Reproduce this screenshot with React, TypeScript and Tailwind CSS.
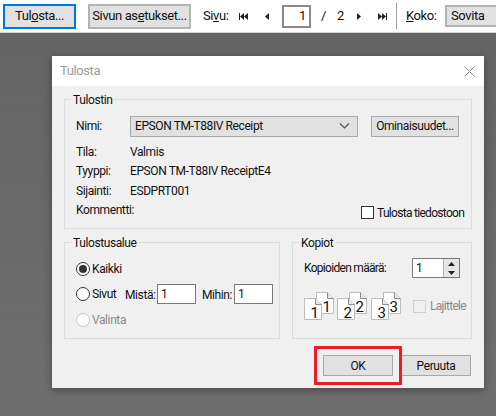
const btn = "flex items-center justify-center bg-[#e1e1e1] border border-[#a8a8a8] whitespace-nowrap";
const toolBtn = "flex items-center justify-center bg-[#e1e1e1] border-2 border-[#b4b4b4] whitespace-nowrap";

const First = () => (
  <svg width="9" height="7" viewBox="0 0 9 7" fill="#222">
    <rect x="0" y="0" width="1" height="7" />
    <path d="M5 0v7L1 3.5zM9 0v7L5 3.5z" />
  </svg>
);
const Prev = () => (
  <svg width="4" height="7" viewBox="0 0 4 7" fill="#222">
    <path d="M4 0v7L0 3.5z" />
  </svg>
);
const Next = () => (
  <svg width="4" height="7" viewBox="0 0 4 7" fill="#222">
    <path d="M0 0v7l4-3.5z" />
  </svg>
);
const Last = () => (
  <svg width="9" height="7" viewBox="0 0 9 7" fill="#222">
    <path d="M0 0v7l4-3.5zM4 0v7l4-3.5z" />
    <rect x="8" y="0" width="1" height="7" />
  </svg>
);

const Toolbar = () => (
  <div className="flex h-[33px] items-center bg-white border-b border-[#d4d4d4] pl-[3px] text-[13px] tracking-[-0.4px]">
    <button className="w-[73px] h-[25px] text-[#111] flex items-center justify-center bg-[#e1e1e1] border-2 border-[#0078d7]">
      <span>
        Tul<u>o</u>sta...
      </span>
    </button>
    <button className={toolBtn + " w-[103px] h-[25px] ml-[12px] text-[#111]"}>
      <span>
        Sivun as<u>e</u>tukset...
      </span>
    </button>
    <span className="ml-[12px] w-[36px]">
      Si<u>v</u>u:
    </span>
    <First />
    <span className="ml-[17px]">
      <Prev />
    </span>
    <div className="ml-[13px] w-[29px] h-[23px] border-2 border-[#8a8a8a] flex items-center justify-end pr-[3px]">1</div>
    <span className="ml-[10px] w-[6px]">/</span>
    <span className="ml-[10px] w-[7px]">2</span>
    <span className="ml-[13px]">
      <Next />
    </span>
    <span className="ml-[17px]">
      <Last />
    </span>
    <div className="ml-[9px] w-px h-[26px] bg-[#a0a0a0]" />
    <span className="ml-[9px] w-[30px]">
      <u>K</u>oko:
    </span>
    <div className="ml-[9px] h-[22px] flex-1 flex items-center pl-[4px] bg-[#e1e1e1] border-2 border-[#b4b4b4] border-r-0">Sovita</div>
  </div>
);

const Group = ({ title, className, children }: { title: string; className: string; children: React.ReactNode }) => (
  <div className={"relative border border-[#dcdcdc] " + className}>
    <span className="absolute left-[6px] top-[-8px] bg-[#f0f0f0] px-[2px] leading-[16px] text-[#111]">{title}</span>
    {children}
  </div>
);

const Info = ({ label, value, className }: { label: string; value?: string; className: string }) => (
  <div className={"flex h-[18px] items-center " + className}>
    <span className="w-[54px]">{label}</span>
    <span>{value}</span>
  </div>
);

const Radio = ({ checked, disabled }: { checked?: boolean; disabled?: boolean }) => (
  <span
    className={
      "w-[14px] h-[14px] rounded-full border bg-white flex items-center justify-center " +
      (disabled ? "border-[#c4c4c4] bg-[#f0f0f0]" : "border-[#333]")
    }
  >
    {checked && <span className="w-[8px] h-[8px] rounded-full bg-[#333]" />}
  </span>
);

const Page = ({ n }: { n: number }) => (
  <div className="relative w-[18px] h-[22px]">
    <svg width="18" height="22" viewBox="0 0 18 22" className="absolute inset-0">
      <path d="M.5.5h11l6 6v15H.5z" fill="#fff" stroke="#bcbcbc" />
      <path d="M11.5.5v6h6" fill="#e8e8e8" stroke="#8c8c8c" />
    </svg>
    <span className="absolute right-[3px] bottom-[-2px] text-[15px] leading-[18px] tracking-normal text-[#111]">{n}</span>
  </div>
);

const Collate = ({ n, className }: { n: number; className: string }) => (
  <div className={"relative w-[30px] h-[28px] " + className}>
    <div className="absolute right-0 top-0">
      <Page n={n} />
    </div>
    <div className="absolute left-0 bottom-0">
      <Page n={n} />
    </div>
  </div>
);

const Dialog = () => (
  <div className="absolute left-[52px] top-[56px] w-[432px] h-[332px] bg-[#f0f0f0] shadow-[0_2px_8px_rgba(0,0,0,0.35)]">
    <div className="h-[30px] bg-white flex items-center justify-between pl-[8px] pr-[9px] text-[#9a9a9a] text-[13px]">
      <span>Tulosta</span>
      <svg width="11" height="11" viewBox="0 0 11 11" stroke="#8a8a8a" fill="none">
        <path d="M.5.5l10 10M10.5.5l-10 10" />
      </svg>
    </div>

    <Group title="Tulostin" className="ml-[12px] mt-[13px] w-[408px] h-[130px] pl-[11px]">
      <div className="flex h-[22px] mt-[15px] items-center">
        <span className="w-[54px]">Nimi:</span>
        <div className={btn + " !justify-between w-[228px] h-[21px] pl-[4px] pr-[7px]"}>
          <span>EPSON TM-T88IV Receipt</span>
          <svg width="11" height="6" viewBox="0 0 11 6" fill="none" stroke="#555" strokeWidth="1.2">
            <path d="M1 .5l4.5 4.5L10 .5" />
          </svg>
        </div>
        <div className={btn + " w-[88px] h-[21px] ml-[13px]"}>Ominaisuudet...</div>
      </div>
      <Info label="Tila:" value="Valmis" className="mt-[6px]" />
      <Info label="Tyyppi:" value="EPSON TM-T88IV ReceiptE4" className="mt-px" />
      <Info label="Sijainti:" value="ESDPRT001" className="mt-[2px]" />
      <div className="flex items-center justify-between h-[18px] mt-[1px] pr-[8px]">
        <span>Kommentti:</span>
        <div className="flex items-center gap-[3px] mt-[5px]">
          <span className="w-[13px] h-[13px] border border-[#333] bg-white" />
          <span className="w-[86px] whitespace-nowrap tracking-[-0.7px]">Tulosta tiedostoon</span>
        </div>
      </div>
    </Group>

    <div className="flex ml-[12px] mt-[13px] w-[408px]">
      <Group title="Tulostusalue" className="w-[216px] h-[97px] pl-[11px]">
        <div className="flex items-center gap-[2px] h-[16px] mt-[18px]">
          <Radio checked />
          <span>Kaikki</span>
        </div>
        <div className="flex items-center h-[20px] mt-[7px]">
          <Radio />
          <span className="ml-[2px] w-[33px]">Sivut</span>
          <span className="mt-[2px] w-[32px]">Mistä:</span>
          <div className="w-[39px] h-[20px] border border-[#7a7a7a] bg-white pl-[3px] flex items-center">1</div>
          <span className="ml-[6px] mt-[2px] w-[32px]">Mihin:</span>
          <div className="w-[39px] h-[20px] border border-[#7a7a7a] bg-white pl-[3px] flex items-center">1</div>
        </div>
        <div className="flex items-center gap-[2px] h-[16px] mt-[8px] text-[#8a8a8a]">
          <Radio disabled />
          <span>Valinta</span>
        </div>
      </Group>
      <Group title="Kopiot" className="w-[180px] h-[97px] ml-[12px] pl-[11px]">
        <div className="flex items-center h-[20px] mt-[15px]">
          <span className="w-[108px] whitespace-nowrap tracking-[-0.7px]">Kopioiden määrä:</span>
          <div className="w-[48px] h-[20px] border border-[#7a7a7a] bg-white pl-[3px] flex items-center justify-between">
            <span>1</span>
            <div className="w-[16px] h-full flex flex-col items-center justify-around bg-[#e6e6e6] border-l border-[#adadad]">
              <svg width="7" height="4" viewBox="0 0 7 4" fill="#222">
                <path d="M3.5 0L7 4H0z" />
              </svg>
              <svg width="7" height="4" viewBox="0 0 7 4" fill="#222">
                <path d="M0 0h7L3.5 4z" />
              </svg>
            </div>
          </div>
        </div>
        <div className="flex items-center mt-[14px]">
          <Collate n={1} className="" />
          <Collate n={2} className="ml-[3px]" />
          <Collate n={3} className="ml-[4px]" />
          <span className="ml-[12px] w-[13px] h-[13px] border border-[#cfcfcf] bg-[#f0f0f0]" />
          <span className="ml-[4px] text-[#8a8a8a] tracking-[-0.7px]">Lajittele</span>
        </div>
      </Group>
    </div>

    <div className="flex justify-end mt-[16px] mr-[13px] gap-[8px]">
      <div className="relative">
        <div className={btn + " w-[70px] h-[21px]"}>OK</div>
        <div className="absolute left-[-9px] top-[-9px] w-[88px] h-[39px] border-[3px] border-[#ed1c24]" />
      </div>
      <div className={btn + " w-[70px] h-[21px]"}>Peruuta</div>
    </div>
  </div>
);

export default function App() {
  return (
    <div className="relative w-[496px] h-[416px] overflow-hidden bg-gradient-to-b from-[#646464] to-[#6e6e6e] font-['Roboto',sans-serif] text-[12px] leading-[16px] tracking-[-0.4px] text-[#111]">
      <Toolbar />
      <Dialog />
    </div>
  );
}
